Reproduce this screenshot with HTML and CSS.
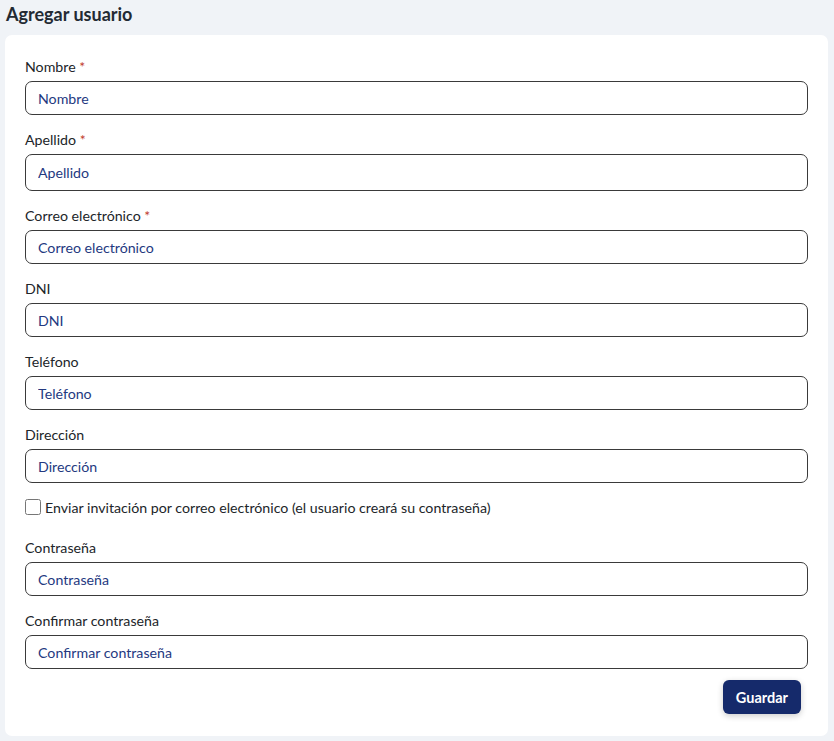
FILE: index.html
```html
<!DOCTYPE html>
<html lang="es">
<head>
  <meta charset="UTF-8">
  <title>Agregar usuario</title>
  <link rel="stylesheet" href="styles.css">
</head>
<body>
  <h1 class="titulo">Agregar usuario</h1>

  <form class="tarjeta">
    <div class="campo">
      <label for="nombre">Nombre <span class="req">*</span></label>
      <input type="text" id="nombre" placeholder="Nombre">
    </div>
    <div class="campo">
      <label for="apellido">Apellido <span class="req">*</span></label>
      <input type="text" id="apellido" class="alto" placeholder="Apellido">
    </div>
    <div class="campo">
      <label for="correo">Correo electrónico <span class="req">*</span></label>
      <input type="email" id="correo" placeholder="Correo electrónico">
    </div>
    <div class="campo">
      <label for="dni">DNI</label>
      <input type="text" id="dni" placeholder="DNI">
    </div>
    <div class="campo">
      <label for="telefono">Teléfono</label>
      <input type="text" id="telefono" placeholder="Teléfono">
    </div>
    <div class="campo">
      <label for="direccion">Dirección</label>
      <input type="text" id="direccion" placeholder="Dirección">
    </div>

    <label class="check">
      <input type="checkbox" id="invitar">
      <span>Enviar invitación por correo electrónico (el usuario creará su contraseña)</span>
    </label>

    <div class="campo">
      <label for="pass">Contraseña</label>
      <input type="password" id="pass" placeholder="Contraseña">
    </div>
    <div class="campo ultimo">
      <label for="pass2">Confirmar contraseña</label>
      <input type="password" id="pass2" placeholder="Confirmar contraseña">
    </div>

    <div class="acciones">
      <button type="submit" class="btn-guardar">Guardar</button>
    </div>
  </form>
</body>
</html>
```

FILE: styles.css
```css
* {
  box-sizing: border-box;
}
body {
  margin: 0;
  padding: 0 6px 6px 5px;
  font-family: Lato, 'Open Sans', sans-serif;
  background-color: #f0f3f7;
  color: #212529;
}
.titulo {
  margin: 0;
  padding: 3px 1px 0;
  height: 35px;
  font-size: 18px;
  font-weight: 700;
  color: #232a33;
}
.tarjeta {
  background: #fff;
  border-radius: 7px;
  padding: 21px 20px 22px;
}
.campo {
  margin-bottom: 14px;
}
.campo.ultimo {
  margin-bottom: 11px;
}
.campo label {
  display: block;
  font-size: 14.2px;
  line-height: 21px;
  margin-bottom: 4px;
}
.req {
  color: #c0392b;
}
.campo input {
  display: block;
  width: 100%;
  height: 34px;
  padding: 0 12px;
  font-family: inherit;
  font-size: 14.2px;
  color: #24397f;
  border: 1px solid #3a3a3a;
  border-radius: 7px;
  outline: none;
}
.campo input.alto {
  height: 37px;
}
.campo input::placeholder {
  color: #24397f;
  opacity: 1;
}
.check {
  display: flex;
  align-items: center;
  gap: 4px;
  font-size: 14.2px;
  margin: 2px 0 20px;
  height: 20px;
}
.check input {
  margin: 0;
  width: 16px;
  height: 16px;
}
.acciones {
  display: flex;
  justify-content: flex-end;
  padding-right: 7px;
}
.btn-guardar {
  height: 34px;
  padding: 0 13px;
  font-family: inherit;
  font-size: 14.5px;
  font-weight: 700;
  color: #fff;
  background-color: #152a6b;
  border: none;
  border-radius: 6px;
  box-shadow: 0 2px 6px rgba(0,0,0,0.2);
  cursor: pointer;
}
```
